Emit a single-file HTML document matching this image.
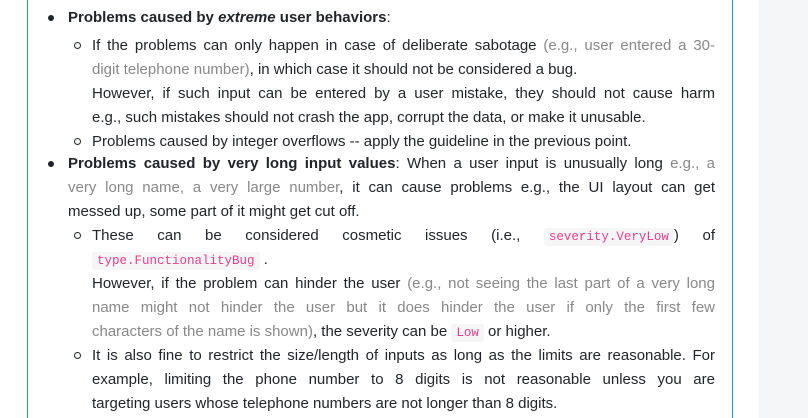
<!DOCTYPE html>
<html><head><meta charset="utf-8"><style>
html,body{margin:0;padding:0;background:#fff;width:808px;height:418px;overflow:hidden;}
body{font-family:"Liberation Sans",sans-serif;font-size:15px;color:#212529;position:relative;}
.box{position:absolute;left:27px;top:-2px;width:704px;height:430px;border-left:1.5px solid #17a2b8;border-right:1.5px solid #17a2b8;}
.side{position:absolute;left:759px;top:0;width:49px;height:418px;background:#f5f6f8;}
.l{position:absolute;height:24px;line-height:24px;white-space:nowrap;text-align:justify;text-align-last:justify;}
.m{left:68px;width:647px;}
.s{left:92px;width:623px;}
.last{text-align-last:left;}
.g{color:#888;}
code{font-family:"Liberation Mono",monospace;font-size:12.5px;color:#e83e8c;background:#f6f6f6;padding:2px 5px;border-radius:3px;}
.b1{position:absolute;left:48px;width:6px;height:6px;border-radius:50%;background:#212529;}
.b2{position:absolute;left:74px;width:5px;height:5px;border-radius:50%;border:1.2px solid #212529;}
</style></head><body>
<div class="box"></div><div class="side"></div>
<div class="b1" style="top:15px"></div>
<div class="l m last" style="top:6px"><b>Problems caused by <i>extreme</i> user behaviors</b>:</div>
<div class="b2" style="top:42px"></div>
<div class="l s" style="top:34px">If the problems can only happen in case of deliberate sabotage <span class="g">(e.g., user entered a 30-</span></div>
<div class="l s last" style="top:58px"><span class="g">digit telephone number)</span>, in which case it should not be considered a bug.</div>
<div class="l s" style="top:82px">However, if such input can be entered by a user mistake, they should not cause harm</div>
<div class="l s last" style="top:106px">e.g., such mistakes should not crash the app, corrupt the data, or make it unusable.</div>
<div class="b2" style="top:138px"></div>
<div class="l s last" style="top:130px">Problems caused by integer overflows -- apply the guideline in the previous point.</div>
<div class="b1" style="top:161px"></div>
<div class="l m" style="top:152px"><b>Problems caused by very long input values</b>: When a user input is unusually long <span class="g">e.g., a</span></div>
<div class="l m" style="top:176px"><span class="g">very long name, a very large number</span>, it can cause problems e.g., the UI layout can get</div>
<div class="l m last" style="top:200px">messed up, some part of it might get cut off.</div>
<div class="b2" style="top:232px"></div>
<div class="l s" style="top:224px">These can be considered cosmetic issues (i.e., <code>severity.VeryLow</code>) of</div>
<div class="l s last" style="top:248px"><code>type.FunctionalityBug</code> .</div>
<div class="l s" style="top:272px">However, if the problem can hinder the user <span class="g">(e.g., not seeing the last part of a very long</span></div>
<div class="l s" style="top:296px"><span class="g">name might not hinder the user but it does hinder the user if only the first few</span></div>
<div class="l s last" style="top:320px"><span class="g">characters of the name is shown)</span>, the severity can be <code>Low</code> or higher.</div>
<div class="b2" style="top:352px"></div>
<div class="l s" style="top:344px">It is also fine to restrict the size/length of inputs as long as the limits are reasonable. For</div>
<div class="l s" style="top:368px">example, limiting the phone number to 8 digits is not reasonable unless you are</div>
<div class="l s last" style="top:392px">targeting users whose telephone numbers are not longer than 8 digits.</div>
</body></html>
